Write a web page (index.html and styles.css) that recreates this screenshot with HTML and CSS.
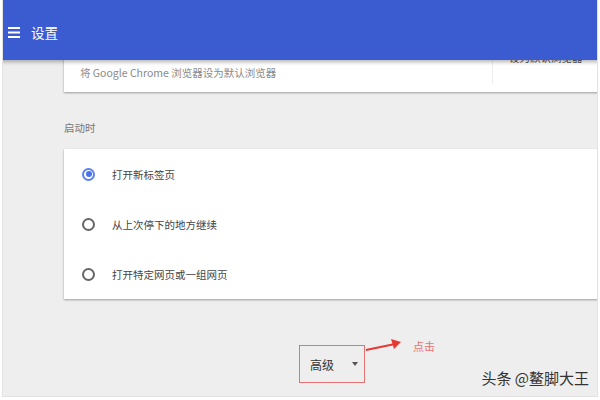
FILE: index.html
```html
<!DOCTYPE html>
<html lang="zh-CN">
<head>
    <meta charset="UTF-8">
    <title>设置</title>
    <link rel="stylesheet" href="styles.css">
</head>
<body>
    <div class="frame">
        <header class="topbar">
            <span class="menu-icon">
                <svg width="12" height="11" viewBox="0 0 12 11"><rect y="0" width="12" height="2" fill="#fff"/><rect y="4.5" width="12" height="2" fill="#fff"/><rect y="9" width="12" height="2" fill="#fff"/></svg>
            </span>
            <span class="title">设置</span>
        </header>

        <main class="content">
            <div class="card default-card">
                <div class="default-text">将 Google Chrome 浏览器设为默认浏览器</div>
                <div class="default-action">设为默认浏览器</div>
            </div>

            <div class="section-label">启动时</div>

            <div class="card startup-card">
                <div class="radio-row">
                    <span class="radio checked"></span>
                    <span>打开新标签页</span>
                </div>
                <div class="radio-row">
                    <span class="radio"></span>
                    <span>从上次停下的地方继续</span>
                </div>
                <div class="radio-row">
                    <span class="radio"></span>
                    <span>打开特定网页或一组网页</span>
                </div>
            </div>

            <div class="advanced-row">
                <div class="advanced-btn">
                    <span>高级</span>
                    <span class="caret"></span>
                </div>
                <svg class="pointer" width="40" height="14" viewBox="0 0 40 14">
                    <line x1="1" y1="12" x2="30" y2="6" stroke="#e53935" stroke-width="2"/>
                    <polygon points="26,1 36,4 29,11" fill="#e53935"/>
                </svg>
                <span class="click-note">点击</span>
            </div>
        </main>

        <div class="watermark">头条 @鳌脚大王</div>
    </div>
</body>
</html>
```

FILE: styles.css
```css
/* Page frame */
body {
    margin: 0;
    width: 600px;
    height: 400px;
    overflow: hidden;
    background: #ffffff;
    font-family: "Noto Sans CJK SC", "Noto Sans", sans-serif;
}

.frame {
    position: relative;
    height: 396px;
    margin-left: 2px;
    margin-right: 2px;
    background: #eeeeee;
    border-left: 1px solid #e2e2e2;
    border-right: 1px solid #e2e2e2;
    border-bottom: 1px solid #e2e2e2;
    overflow: hidden;
}

.topbar {
    position: relative;
    z-index: 2;
    height: 60px;
    display: flex;
    align-items: center;
    padding: 4px 0 0 4px;
    box-sizing: border-box;
    margin-left: -3px;
    margin-right: -3px;
    background: #3b5bd0;
    box-shadow: 0 2px 4px rgba(0, 0, 0, 0.3);
    color: #ffffff;
}

.menu-icon {
    display: flex;
    margin-left: 4px;
    margin-right: 11px;
}

.title {
    font-size: 13.5px;
}

.content {
    padding: 0 0 0 61px;
}

.card {
    background: #ffffff;
    box-shadow: 0 1px 2px rgba(0, 0, 0, 0.35);
}

.default-card {
    display: flex;
    height: 50px;
    margin-top: -18px;
    margin-right: -4px;
}

.default-text {
    flex: 1;
    padding: 23px 0 0 16px;
    font-size: 10.5px;
    color: #8a8a8a;
    border-right: 1px solid #eeeeee;
    max-width: 412px;
    margin-bottom: 8px;
}

.default-action {
    padding: 8px 0 0 16px;
    font-size: 10.5px;
    color: #555555;
}

.section-label {
    margin-top: 28px;
    font-size: 10.5px;
    color: #777777;
}

.startup-card {
    margin-top: 14px;
    margin-right: -4px;
    height: 150px;
}

.radio-row {
    display: flex;
    align-items: center;
    height: 50px;
    padding-left: 18px;
    font-size: 10.5px;
    color: #444444;
}

.radio {
    width: 9px;
    height: 9px;
    border: 2px solid #666666;
    border-radius: 50%;
    margin-right: 17px;
    box-sizing: content-box;
    position: relative;
}

.radio.checked {
    border-color: #5b82f0;
}

.radio.checked::after {
    content: "";
    position: absolute;
    left: 1.5px;
    top: 1.5px;
    width: 6px;
    height: 6px;
    border-radius: 50%;
    background: #4a72ec;
}

.advanced-row {
    display: flex;
    align-items: flex-start;
    margin-top: 46px;
    padding-left: 235px;
}

.advanced-btn {
    display: flex;
    align-items: center;
    width: 66px;
    height: 38px;
    border: 1.5px solid #e57373;
    box-sizing: border-box;
    padding-left: 10px;
    font-size: 12px;
    color: #333333;
}

.caret {
    margin-left: 18px;
    width: 0;
    height: 0;
    border-left: 3px solid transparent;
    border-right: 3px solid transparent;
    border-top: 4px solid #555555;
}

.pointer {
    margin-top: -7px;
}

.click-note {
    margin-left: 8px;
    margin-top: -7px;
    font-size: 11px;
    color: #e57373;
}

.watermark {
    position: absolute;
    right: 8px;
    bottom: 8px;
    font-size: 15px;
    color: #333333;
}
```
